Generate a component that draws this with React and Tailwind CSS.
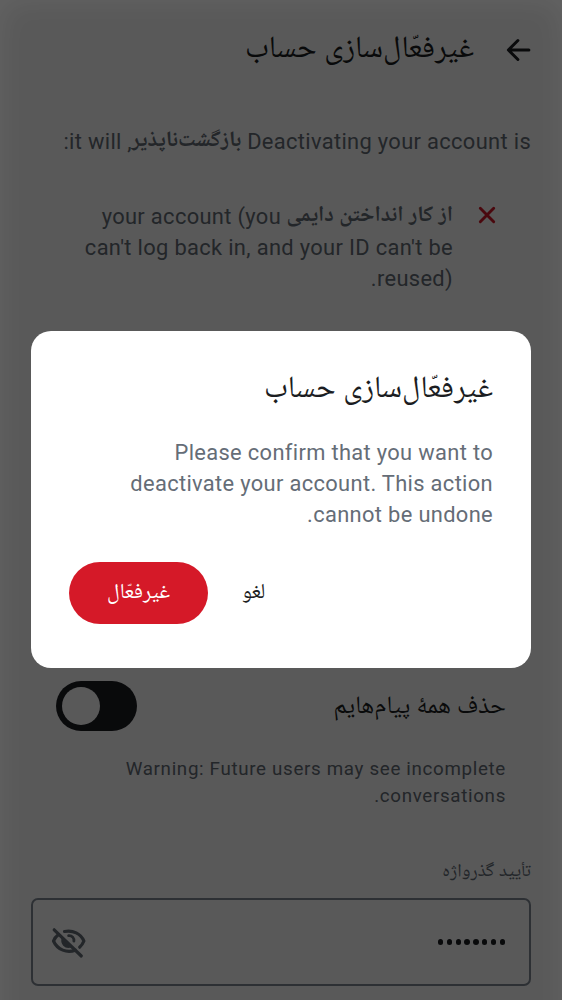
function BackArrow() {
  return (
    <svg viewBox="0 0 26 26" className="mt-[2px] h-[26px] w-[26px]" fill="none" stroke="currentColor" strokeWidth="3" strokeLinecap="round" strokeLinejoin="round">
      <path d="M23.900 13H3.800M12.900 3.500L3.400 13l9.500 9.500" />
    </svg>
  );
}

function Cross() {
  return (
    <svg viewBox="0 0 18 18" className="h-[18px] w-[18px]" fill="none" stroke="currentColor" strokeWidth="2.900" strokeLinecap="round">
      <path d="M2.300 2.300l13.400 13.400M15.700 2.300L2.300 15.700" />
    </svg>
  );
}

function EyeOff() {
  return (
    <svg viewBox="0 0 36 32" className="mt-[2px] h-8 w-9" fill="none" stroke="currentColor" strokeWidth="3.200" strokeLinecap="round" strokeLinejoin="round">
      <path d="M3.200 2.800L30.300 29" />
      <path d="M13.500 4.500C22 2.900 29.800 6.500 32.900 14c-.9 2.200-2.200 4.300-4.200 6.200" />
      <path d="M7.500 7.600C5.300 9.300 3.500 11.300 2.500 14c4 9 13.500 12.300 21.800 9.200" />
      <path d="M17.600 8.600c3.500-.2 5.700 2.300 5.300 5.600" strokeWidth="2.800" />
      <path d="M11.700 11.200c-1.800 5.200 2.400 10.200 8.300 8.400z" fill="currentColor" strokeWidth="2" />
    </svg>
  );
}

function Page() {
  return (
    <main className="flex h-[1000px] flex-col px-[31px] text-[#656d77]">
      <header className="flex h-[98px] items-center gap-[31px] text-[#1b1d22]">
        <BackArrow />
        <h1 className="pt-1 text-[30.8px] leading-10">غیرفعّال‌سازی حساب</h1>
      </header>
      <p className="mt-[28px] whitespace-nowrap text-[21.875px] leading-[31px] tracking-[0.34px]">
        Deactivating your account is <b className="leading-none tracking-normal">بازگشت‌ناپذیر</b>, it will:
      </p>
      <div className="mt-11 flex gap-[25px] pr-[35px]">
        <span className="mt-[5px] shrink-0 text-[#d51928]"><Cross /></span>
        <p className="w-[376px] text-[21.875px] leading-[31px] tracking-[0.34px]">
          <b className="leading-none tracking-normal">از کار انداختن دایمی</b> your account (you can't log back in, and your ID can't be reused).
        </p>
      </div>
      <div className="mt-[387px] flex h-[50px] items-center justify-between px-[25px] text-[#1b1d22]">
        <span className="pt-[2px] text-[25px] leading-[31px]">حذف همهٔ پیام‌هایم</span>
        <span className="flex h-[50px] w-[81px] items-center justify-end rounded-full bg-[#1b1d22] pl-[6px]">
          <span className="h-[38px] w-[38px] rounded-full bg-white" />
        </span>
      </div>
      <p className="mt-[25px] w-[430px] pr-[25px] text-[18.75px] leading-[27px] tracking-[0.67px]">
        Warning: Future users may see incomplete conversations.
      </p>
      <label className="mt-[48px] text-[18.75px] leading-[30px]">تأیید گذرواژه</label>
      <div className="mt-[10px] flex h-[88px] items-center justify-between rounded-[7px] border-2 border-[#818a95] pr-[24px] pl-[18px]">
        <span className="flex gap-[3.3px] text-[#1b1d22]">
          {Array.from({ length: 8 }, (_, i) => (
            <span key={i} className="h-[5.5px] w-[5.5px] rounded-full bg-current" />
          ))}
        </span>
        <EyeOff />
      </div>
    </main>
  );
}

export default function App() {
  return (
    <div dir="rtl" className="relative h-[1000px] w-[562px] overflow-hidden bg-white font-['Roboto','Noto_Naskh_Arabic_UI','Noto_Naskh_Arabic','Noto_Sans_Arabic','Noto_Sans',sans-serif]">
      <Page />
      <div className="absolute inset-0 bg-black/65" />
      <div className="absolute inset-x-0 top-0 h-[1060px] shadow-[inset_0_0_32px_rgba(255,255,255,0.07)]" />
      <section role="dialog" className="absolute top-[331px] left-[31px] flex h-[337px] w-[500px] flex-col rounded-[20px] bg-white px-[38px] pt-10">
        <h2 className="text-[30.8px] leading-10 text-[#1b1d22]">غیرفعّال‌سازی حساب</h2>
        <p className="mt-[26px] w-[390px] text-[21.875px] leading-[31px] tracking-[0.34px] text-[#656d77]">
          Please confirm that you want to deactivate your account. This action cannot be undone.
        </p>
        <div className="mt-[32px] flex items-center justify-end gap-[34px]">
          <button className="pt-[2px] text-[21.200px] leading-[30px] text-[#1b1d22]">لغو</button>
          <button className="h-[62px] w-[139px] rounded-full bg-[#d51928] pt-[2px] text-[21.400px] leading-[30px] text-white">غیرفعّال</button>
        </div>
      </section>
    </div>
  );
}
